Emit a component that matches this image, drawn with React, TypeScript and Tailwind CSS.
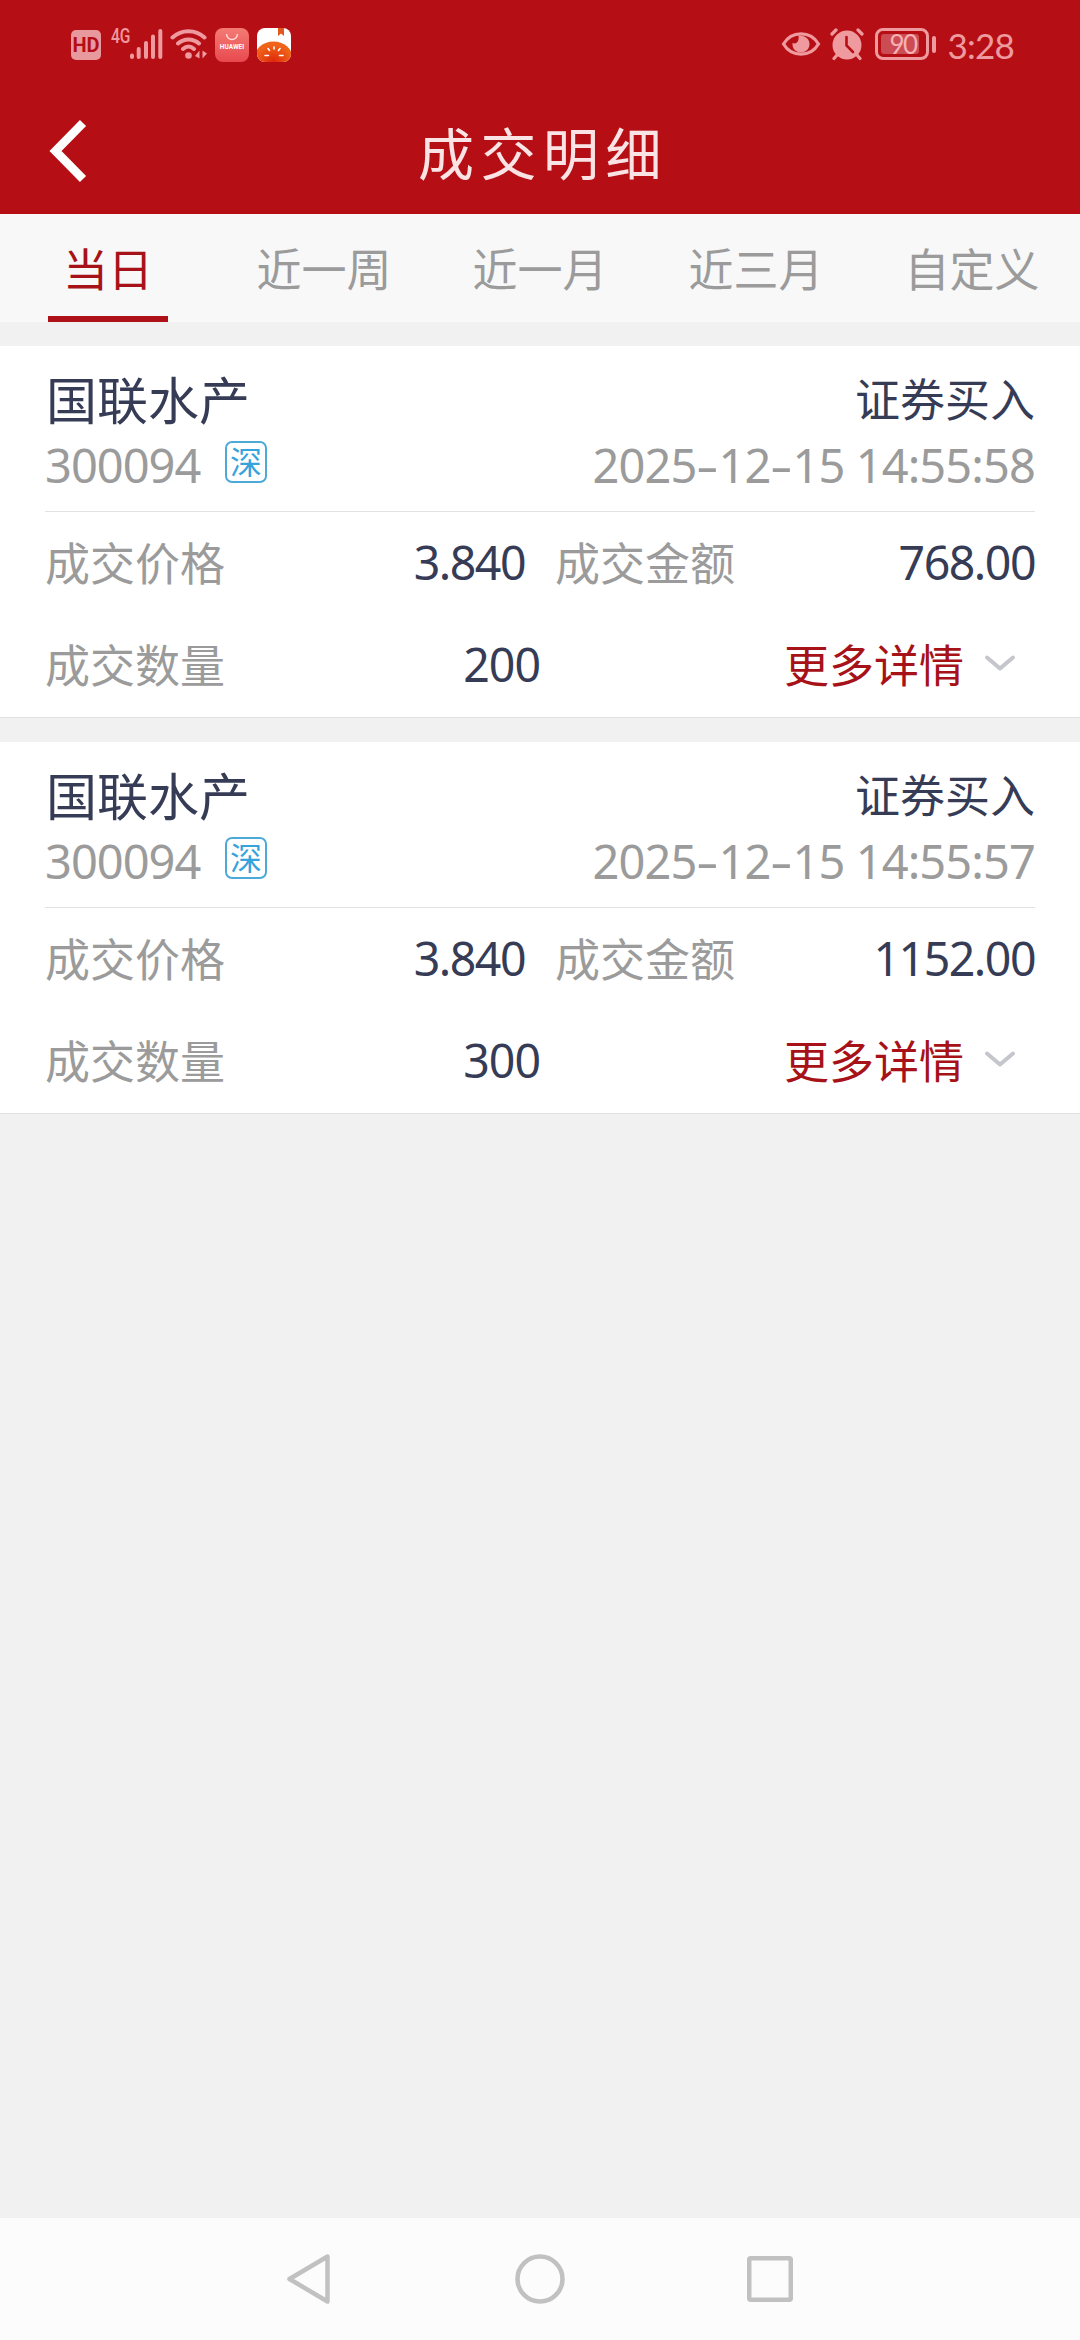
import React from 'react';

type Trade = {
  name: string;
  code: string;
  side: string;
  time: string;
  price: string;
  amount: string;
  quantity: string;
};

const trades: Trade[] = [
  { name: '国联水产', code: '300094', side: '证券买入', time: '2025-12-15 14:55:58', price: '3.840', amount: '768.00', quantity: '200' },
  { name: '国联水产', code: '300094', side: '证券买入', time: '2025-12-15 14:55:57', price: '3.840', amount: '1152.00', quantity: '300' },
];

const tabs = ['当日', '近一周', '近一月', '近三月', '自定义'];

function StatusBar() {
  return (
    <div className="flex h-[90px] items-start pl-[71px] pr-[66px] pt-[28px] text-[#ee9a9f]">
      <div className="mt-[2px] flex h-[30px] w-[30px] items-center justify-center rounded-[5px] bg-[#e8999e] font-['Roboto',sans-serif] text-[20px] font-bold leading-none text-[#b50f15]">
        HD
      </div>
      <span className="ml-[10px] inline-block w-[20px] origin-left scale-x-[0.78] font-['Roboto',sans-serif] text-[20px] font-medium leading-[16px]">4G</span>
      <svg className="-ml-[2px]" width="34" height="34" viewBox="0 0 34 34" stroke="currentColor" strokeWidth="4" strokeLinecap="round">
        <path d="M3 27.5V29M9.7 21V29M17 15V29M24 8.5V29M31.3 3V29" />
      </svg>
      <svg className="ml-[7px]" width="38" height="34" viewBox="0 0 38 34" fill="none" stroke="currentColor" strokeWidth="4" strokeLinecap="round">
        <path d="M2.5 9.5C11.5 1 25.5 1 34.5 9.5M8 15.5C14 10 23 10 29 15.5M13 21C16.500 17.800 20.500 17.800 24 21" />
        <circle cx="18.500" cy="27.500" r="3.300" fill="currentColor" stroke="none" />
        <path d="M29.500 22.500V30.500L25 28zM32.500 22.500V30.500L37 25.500z" fill="currentColor" stroke="none" />
      </svg>
      <div className="ml-[7px] flex h-[34px] w-[34px] flex-col items-center rounded-[8px] bg-gradient-to-b from-[#f47a74] to-[#e8484f]">
        <svg className="mt-[5px]" width="14" height="8" viewBox="0 0 14 8" fill="none" stroke="#ffd9d6" strokeWidth="1.500">
          <path d="M1.500 1C2.500 8.200 11.500 8.200 12.500 1" />
        </svg>
        <span className="mt-[3px] font-['Roboto',sans-serif] text-[6.5px] font-bold leading-[7px] text-white">HUAWEI</span>
      </div>
      <svg className="ml-[8px]" width="34" height="34" viewBox="0 0 34 34">
        <defs>
          <clipPath id="reader-tile"><rect width="34" height="34" rx="8" /></clipPath>
          <radialGradient id="reader-fruit" cx="0.500" cy="0.600" r="0.500">
            <stop offset="0" stopColor="#e0280c" />
            <stop offset="1" stopColor="#ef6418" />
          </radialGradient>
        </defs>
        <g clipPath="url(#reader-tile)">
          <rect width="34" height="34" fill="#fff" />
          <ellipse cx="16.500" cy="30" rx="19" ry="16.500" fill="url(#reader-fruit)" />
          <path d="M21 0H27V8L24 5.500L21 8z" fill="#e2561f" />
          <path d="M17 19V21M11 20.500L12.500 22.500M23 20.500L21.500 22.500M8 27.500H11.500M22.500 27.500H26" stroke="#fff" strokeWidth="1.600" strokeLinecap="round" />
        </g>
      </svg>
      <svg className="ml-auto" width="40" height="34" viewBox="0 0 40 34" fill="none" stroke="currentColor" strokeWidth="3.200">
        <path d="M2.500 16C10.500 2.500 29.500 2.500 37.500 16C29.500 29.500 10.500 29.500 2.500 16z" />
        <path d="M17.500 7.500C18.500 14 15 16.500 11.500 15C11 21 15 24.500 20 24.500C25 24.500 28.500 20.500 28.500 16C28.500 11 24 7 17.500 7.500z" fill="currentColor" stroke="none" />
      </svg>
      <svg className="ml-[9px]" width="34" height="34" viewBox="0 0 34 34">
        <circle cx="17" cy="17" r="14.500" fill="currentColor" />
        <path d="M2 6L6 2M28 2L32 6M7 27L4 30.500M27 27L30 30.500" stroke="currentColor" strokeWidth="3.200" strokeLinecap="round" />
        <path d="M16.500 9V17.500L23 24" fill="none" stroke="#b50f15" strokeWidth="2.600" strokeLinecap="round" />
      </svg>
      <div className="ml-[11px] flex h-[32px] w-[54px] items-center rounded-[8px] border-[3px] border-current p-[3px]">
        <div className="flex h-full w-[38px] items-center justify-end rounded-[3px] bg-[#cb4c52] pr-[2px] font-['Lato',sans-serif] text-[26px] leading-none tracking-[-1.5px] text-[#f7b0b4]">
          90
        </div>
      </div>
      <div className="ml-[3px] mt-[8px] h-[17px] w-[4px] rounded-full bg-current" />
      <span className="ml-[12px] font-['Lato',sans-serif] text-[35px] leading-[35px] tracking-[-0.8px]">3:28</span>
    </div>
  );
}

/** Date and time with wide dashes between year, month and day. */
function Timestamp({ value }: { value: string }) {
  const parts = value.split('-');
  return (
    <span className="whitespace-pre font-['Noto_Sans',sans-serif] text-[47px] leading-[70px] tracking-[-0.9px]">
      {parts.map((part, i) => (
        <React.Fragment key={i}>
          {i > 0 && <span className="inline-block w-[22px] origin-left scale-x-[1.5]">-</span>}
          {part}
        </React.Fragment>
      ))}
    </span>
  );
}

function TradeCard({ trade }: { trade: Trade }) {
  return (
    <section className="h-[372px] border-b border-[#e1e1e1] bg-white px-[45px]">
      <div className="h-[166px] border-b border-[#e2e2e2] pt-[22px]">
        <div className="flex h-[60px] items-center justify-between text-[#363c55]">
          <h2 className="pl-px text-[51px] leading-[60px]">{trade.name}</h2>
          <span className="text-[45px] leading-[60px]">{trade.side}</span>
        </div>
        <div className="mt-[2px] flex h-[70px] items-center justify-between text-[#9b9b9b]">
          <div className="flex items-center">
            <span className="w-[180px] font-['Noto_Sans',sans-serif] text-[47px] leading-[70px] tracking-[-1px]">{trade.code}</span>
            <span className="-mt-[7px] flex h-[42px] w-[42px] items-center justify-center rounded-[7px] border-2 border-[#4da9d8] text-[32px] leading-none text-[#36a3dc]">
              <span className="-mt-[3px]">深</span>
            </span>
          </div>
          <Timestamp value={trade.time} />
        </div>
      </div>
      <div className="flex h-[102px] items-center text-[45px] text-[#9b9b9b]">
        <span className="-mt-[3px] w-[240px]">成交价格</span>
        <span className="w-[240px] text-right font-['Noto_Sans',sans-serif] text-[46.5px] tracking-[-1.5px] text-[#363c55]">{trade.price}</span>
        <span className="-mt-[3px] ml-[30px]">成交金额</span>
        <span className="ml-auto font-['Noto_Sans',sans-serif] text-[46.5px] tracking-[-1.5px] text-[#363c55]">{trade.amount}</span>
      </div>
      <div className="flex h-[102px] items-center text-[45px] text-[#9b9b9b]">
        <span className="-mt-[3px] w-[240px]">成交数量</span>
        <span className="w-[255px] text-right font-['Noto_Sans',sans-serif] text-[46.5px] tracking-[-1px] text-[#363c55]">{trade.quantity}</span>
        <button className="-mt-[3px] ml-auto flex items-center pr-[18px] text-[#a61218]">
          更多详情
          <svg className="-mt-[2px] ml-[19px]" width="34" height="20" viewBox="0 0 34 20" fill="none" stroke="#c5c5cc" strokeWidth="4" strokeLinecap="round" strokeLinejoin="round">
            <path d="M4 4.500L17 15.500L30 4.500" />
          </svg>
        </button>
      </div>
    </section>
  );
}

export default function App() {
  return (
    <div className="flex h-[2340px] w-[1080px] flex-col overflow-hidden bg-[#f1f1f1] font-['Noto_Sans_CJK_SC',sans-serif]">
      <header className="h-[214px] bg-[#b50f15]">
        <StatusBar />
        <div className="grid h-[124px] grid-cols-[200px_1fr_200px] items-center">
          <button aria-label="返回" className="-mt-[2px] pl-[45px]">
            <svg width="48" height="70" viewBox="0 0 48 70" fill="none" stroke="#fff" strokeWidth="8.600">
              <path d="M38 7L10.500 35L38 63" />
            </svg>
          </button>
          <h1 className="-mt-[3px] pl-[6px] text-center text-[56px] leading-[80px] tracking-[6.5px] text-[#fae3e4]">成交明细</h1>
        </div>
      </header>
      <nav className="grid h-[108px] grid-cols-5 bg-[#f8f8f8]">
        {tabs.map((tab, i) => (
          <button key={tab} className={i === 0 ? 'flex flex-col items-center text-[45px] text-[#a61218]' : 'flex flex-col items-center text-[45px] text-[#9b9b9b]'}>
            <span className="h-[102px] leading-[108px]">{tab}</span>
            {i === 0 && <span className="h-[6px] w-[120px] bg-[#ae1117]" />}
          </button>
        ))}
      </nav>
      <main className="mt-[24px] flex flex-1 flex-col gap-[24px]">
        {trades.map((trade) => (
          <TradeCard key={trade.time} trade={trade} />
        ))}
      </main>
      <footer className="flex h-[122px] items-center justify-between bg-[#fcfcfc] pb-0 pl-[284px] pr-[285px]">
        <svg width="50" height="54" viewBox="0 0 50 54" fill="none" stroke="#c1c1c1" strokeWidth="4.500" strokeLinejoin="round">
          <path d="M43.500 4.500L5.500 27L43.500 49.500z" />
        </svg>
        <svg width="54" height="54" viewBox="0 0 54 54" fill="none" stroke="#c1c1c1" strokeWidth="4.500">
          <circle cx="27" cy="27" r="22.500" />
        </svg>
        <svg width="50" height="50" viewBox="0 0 50 50" fill="none" stroke="#c1c1c1" strokeWidth="4.500">
          <rect x="4.250" y="4.250" width="41.500" height="41.500" rx="1.500" />
        </svg>
      </footer>
    </div>
  );
}
